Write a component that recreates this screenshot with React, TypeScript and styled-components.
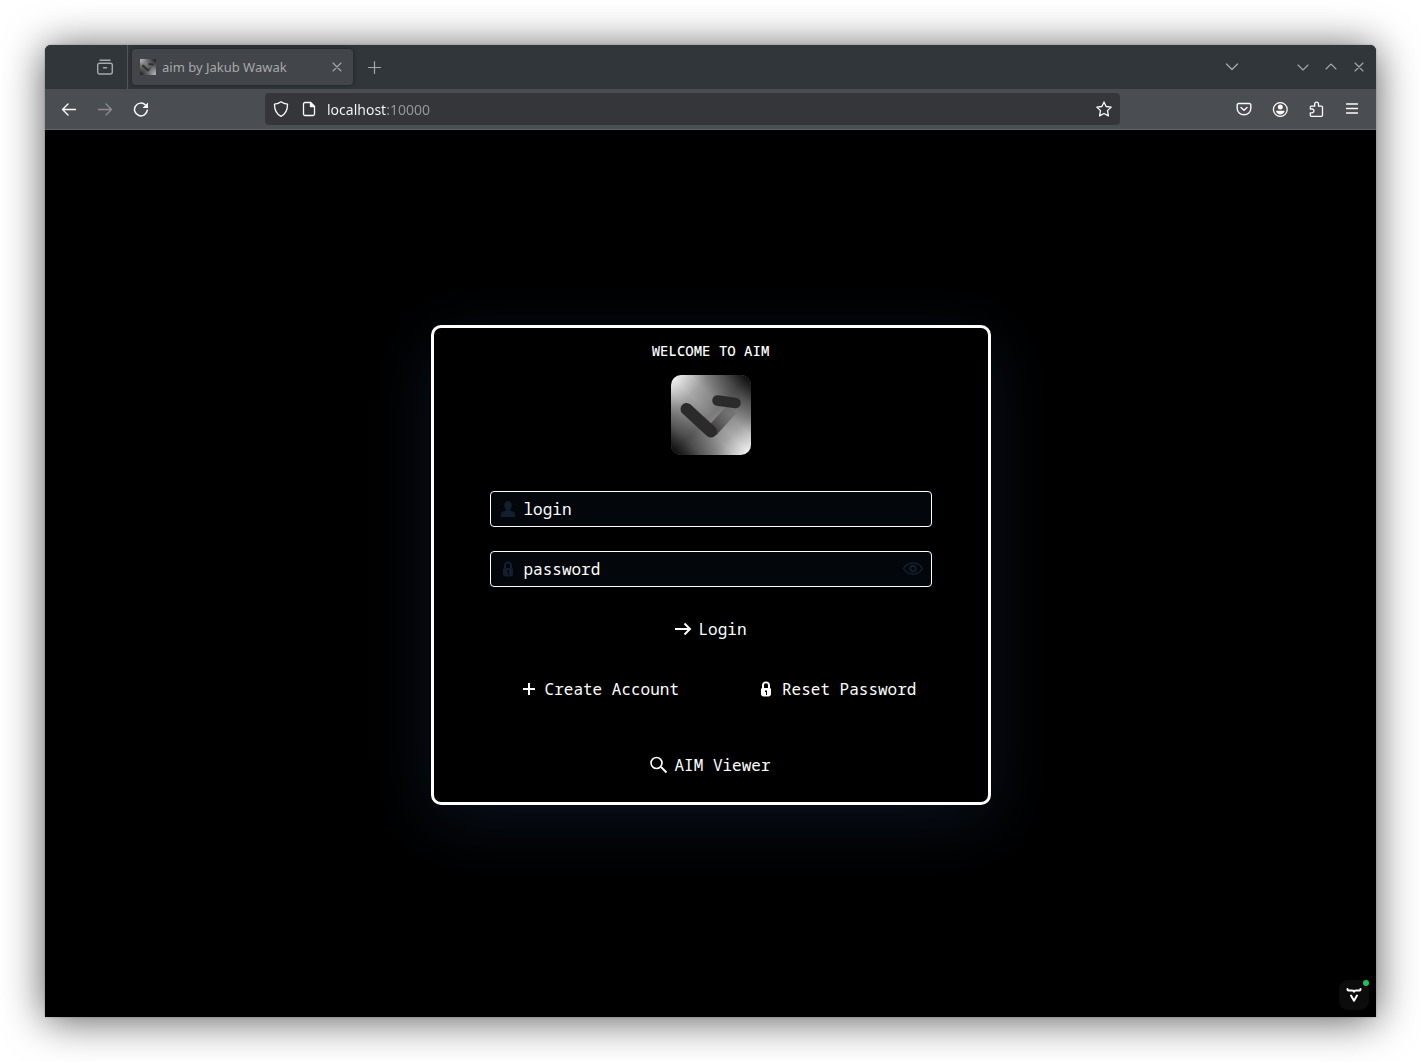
import React from "react";
import styled, { createGlobalStyle } from "styled-components";

const mono = `"Noto Sans Mono", "DejaVu Sans Mono", "Liberation Mono", monospace`;

const GlobalStyle = createGlobalStyle`
  *, *::before, *::after { box-sizing: border-box; }
  body { margin: 0; background: #fff; font-family: "Noto Sans", "Open Sans", sans-serif; }
  button, input { font: inherit; color: inherit; }
  svg { display: block; flex: none; }
`;

const Desktop = styled.div`
  display: flex;
  min-height: 100vh;
  padding: 45px;
`;

const BrowserWindow = styled.div`
  flex: 1;
  min-width: 0;
  display: flex;
  flex-direction: column;
  border-radius: 6px 6px 0 0;
  background: #000;
  box-shadow: 0 0 2px rgba(0, 0, 0, 0.3), 0 3px 42px rgba(0, 0, 0, 0.66);
`;

const TabStrip = styled.header`
  display: flex;
  align-items: stretch;
  height: 44px;
  border-radius: 6px 6px 0 0;
  background: #31363b;
  color: #a6a9ab;
`;

const PlainButton = styled.button`
  display: flex;
  align-items: center;
  justify-content: center;
  padding: 0;
  border: 0;
  background: none;
  cursor: pointer;
`;

const RecentButton = styled(PlainButton)`
  width: 83px;
  padding-left: 37px;
  border-right: 1px solid #51565a;
`;

const Tab = styled.div`
  display: flex;
  align-items: center;
  gap: 6px;
  width: 221px;
  margin: 4px;
  padding: 0 8px;
  border-radius: 4px;
  background: #424549;
  box-shadow: 0 0 4px rgba(0, 0, 0, 0.4);
  font-size: 13px;
`;

const TabTitle = styled.span`
  flex: 1;
  white-space: nowrap;
`;

const IconButton = styled(PlainButton)<{ $size?: number; $tone?: string }>`
  width: ${(p) => p.$size ?? 36}px;
  color: ${(p) => p.$tone ?? "inherit"};
`;

const WindowControls = styled.div`
  display: flex;
  margin-left: auto;
  padding-right: 3px;
`;

const ListTabs = styled(IconButton)`
  margin-right: 39px;
`;

const NavBar = styled.nav`
  display: flex;
  align-items: center;
  height: 41px;
  padding: 0 6px;
  border-bottom: 1px solid #5f6467;
  background: #4a4d51;
  color: #fbfbfe;
`;

const NavGroup = styled.div`
  display: flex;
`;

const AddressBar = styled.form`
  display: flex;
  align-items: center;
  flex: 1;
  min-width: 0;
  height: 32px;
  margin: 0 106px;
  padding: 0 2px;
  border-radius: 4px;
  background: #35363a;
`;

const Address = styled.input`
  flex: 1;
  min-width: 0;
  padding: 0 4px;
  border: 0;
  outline: 0;
  font-size: 14px;
  color: #fbfbfe;
  background: linear-gradient(90deg, #fbfbfe 63px, #97989a 63px);
  background-clip: text;
  -webkit-text-fill-color: transparent;
`;

const Page = styled.main`
  position: relative;
  flex: 1;
  display: flex;
  align-items: center;
  justify-content: center;
  padding: 16px 16px 34px;
  font-family: ${mono};
  font-size: 16px;
  color: #fff;
`;

const Card = styled.form`
  display: flex;
  flex-direction: column;
  align-items: center;
  width: 560px;
  padding: 11px 56px 19px;
  border: 3px solid #fff;
  border-radius: 10px;
  background: #000;
  box-shadow: 0 16px 68px rgba(28, 52, 88, 0.34);
`;

const Title = styled.h1`
  margin: 0 0 12px;
  font-size: 14px;
  line-height: 24px;
  font-weight: 500;
`;

const Field = styled.label`
  display: flex;
  align-items: center;
  width: 100%;
  height: 36px;
  margin-bottom: 24px;
  padding: 0 6px 0 5px;
  border: 1px solid #fff;
  border-radius: 4px;
  background: #03060b;
  color: #131f2f;
`;

const FieldInput = styled.input`
  flex: 1;
  min-width: 0;
  padding: 0 4px;
  border: 0;
  outline: 0;
  background: none;
  color: #fff;
  &::placeholder { color: #fff; opacity: 1; }
`;

const ActionButton = styled(PlainButton)`
  gap: 4px;
  height: 36px;
  padding: 0 8px 0 4px;
  white-space: nowrap;
`;

const AccountRow = styled.div`
  display: flex;
  justify-content: center;
  gap: 63px;
  width: 100%;
  margin: 24px 0 40px;
  padding-left: 16px;
`;

const DevTools = styled(PlainButton)`
  position: absolute;
  right: 7px;
  bottom: 7px;
  width: 30px;
  height: 30px;
  border-radius: 9px;
  background: #0c0c0c;
`;

const StatusDot = styled.span`
  position: absolute;
  top: 0;
  right: 0;
  width: 6px;
  height: 6px;
  border-radius: 50%;
  background: #17c45d;
`;

const LogoImage = styled.svg`
  margin-bottom: 36px;
`;

const Line = ({ d, size = 16, width = 1.3 }: { d: string; size?: number; width?: number }) => (
  <svg width={size} height={size} viewBox={`0 0 ${size} ${size}`} fill="none" stroke="currentColor" strokeWidth={width} strokeLinecap="round" strokeLinejoin="round" aria-hidden="true">
    <path d={d} />
  </svg>
);

const LogoArt = ({ id, radius }: { id: string; radius: number }) => (
  <>
    <defs>
      <linearGradient id={`${id}-bg`} x1="0" y1="0" x2="1" y2="1">
        <stop offset="0" stopColor="#fff" />
        <stop offset="0.25" stopColor="#a8a8a8" />
        <stop offset="0.5" stopColor="#7c7c7c" />
        <stop offset="0.75" stopColor="#a8a8a8" />
        <stop offset="1" stopColor="#fff" />
      </linearGradient>
      <linearGradient id={`${id}-dark`} x1="0" y1="1" x2="1" y2="0">
        <stop offset="0" stopColor="#000" />
        <stop offset="0.2" stopColor="#000" stopOpacity="0.42" />
        <stop offset="0.4" stopColor="#000" stopOpacity="0.06" />
        <stop offset="0.5" stopColor="#000" stopOpacity="0" />
        <stop offset="0.62" stopColor="#000" stopOpacity="0.06" />
        <stop offset="0.82" stopColor="#000" stopOpacity="0.46" />
        <stop offset="1" stopColor="#000" />
      </linearGradient>
      <linearGradient id={`${id}-arm`} gradientUnits="userSpaceOnUse" x1="42" y1="56" x2="62" y2="34">
        <stop offset="0" stopColor="#3c3a3b" />
        <stop offset="1" stopColor="#6c6a6b" stopOpacity="0.4" />
      </linearGradient>
    </defs>
    <rect width="80" height="80" rx={radius} fill={`url(#${id}-bg)`} />
    <rect width="80" height="80" rx={radius} fill={`url(#${id}-dark)`} />
    <path d="M41 56 61 34" stroke={`url(#${id}-arm)`} strokeWidth="12" />
    <path d="M15.500 34 40 56.500" stroke="#2b2b2b" strokeWidth="12" strokeLinecap="round" />
    <path d="M46.500 25.500 64.500 28" stroke="#2b2b2b" strokeWidth="10.500" strokeLinecap="round" />
  </>
);

const UserIcon = () => (
  <svg width="24" height="24" viewBox="0 0 24 24" fill="currentColor" aria-hidden="true">
    <path d="M12 4c2.400 0 3.700 1.700 3.700 4.200 0 1.600-.6 3-1.700 4v1.300l3.600 1.200c1.200.5 1.600 1.700 1.600 3.800V20H4.800v-1.500c0-2.100.4-3.300 1.600-3.800l3.600-1.200v-1.300c-1.100-1-1.700-2.400-1.700-4C8.300 5.700 9.600 4 12 4z" />
  </svg>
);

const LockIcon = () => (
  <svg width="24" height="24" viewBox="0 0 24 24" fill="currentColor" fillRule="evenodd" aria-hidden="true">
    <path d="M8 11V8.500C8 6 9.500 4.500 12 4.500S16 6 16 8.500V11c.7.200 1 .7 1 1.400v4.400c0 1.800-1 2.700-2.700 2.700H9.700C8 19.500 7 18.600 7 16.800v-4.400c0-.7.300-1.200 1-1.400zm2-.1h4V8.500c0-1.400-.7-2.200-2-2.200s-2 .8-2 2.200v2.400zM11 13.500v1.600h1V18h1v-4.500h-2z" />
  </svg>
);

const EyeIcon = () => (
  <svg width="24" height="24" viewBox="0 0 24 24" fill="none" stroke="currentColor" strokeWidth="1.500" aria-hidden="true">
    <path d="M2.500 11.500C4.500 8 8 6 12 6s7.500 2 9.500 5.500c-2 3.500-5.500 5.500-9.500 5.500S4.500 15 2.500 11.500z" />
    <circle cx="12" cy="11.500" r="2.800" strokeWidth="2" />
  </svg>
);

const ActionIcon = ({ d, circle }: { d: string; circle?: boolean }) => (
  <svg width="24" height="24" viewBox="0 0 24 24" fill="none" stroke="currentColor" strokeWidth={circle ? 1.6 : 2} aria-hidden="true">
    {circle && <circle cx="10.500" cy="10" r="5.500" />}
    <path d={d} strokeWidth="2" />
  </svg>
);

export default function App() {
  return (
    <>
      <GlobalStyle />
      <Desktop>
        <BrowserWindow>
          <TabStrip>
            <RecentButton aria-label="Recent browsing">
              <Line d="M3 1.200h10M2.600 4.200h10.800a1.900 1.900 0 0 1 1.900 1.900v7a1.900 1.900 0 0 1-1.900 1.900H2.600a1.900 1.900 0 0 1-1.900-1.900v-7a1.900 1.900 0 0 1 1.900-1.900zM6.500 8.700h3" width={1.4} />
            </RecentButton>
            <Tab>
              <svg width="16" height="16" viewBox="0 0 80 80" fill="none" opacity="0.65" aria-hidden="true"><LogoArt id="tab" radius={4} /></svg>
              <TabTitle>aim by Jakub Wawak</TabTitle>
              <PlainButton aria-label="Close tab"><Line d="M4 4l8 8M12 4l-8 8" width={1.1} /></PlainButton>
            </Tab>
            <IconButton aria-label="New tab"><Line d="M7.500 2.500v12M1.500 8.500h12" width={1.2} /></IconButton>
            <WindowControls>
              <ListTabs aria-label="List all tabs"><Line d="M2.500 5 8 10.500 13.500 5" width={1.3} /></ListTabs>
              <IconButton $size={28} aria-label="Minimize"><Line d="M3 6l5 5 5-5" width={1.1} /></IconButton>
              <IconButton $size={28} aria-label="Maximize"><Line d="M3 10l5-5 5 5" width={1.1} /></IconButton>
              <IconButton $size={28} aria-label="Close"><Line d="M4 4l8 8M12 4l-8 8" width={1.1} /></IconButton>
            </WindowControls>
          </TabStrip>
          <NavBar>
            <NavGroup>
              <IconButton aria-label="Back"><Line d="M14.500 8.500H1.500M7 3 1.500 8.500 7 14" width={1.4} /></IconButton>
              <IconButton $tone="#8b8d90" aria-label="Forward"><Line d="M1.500 8.500h13M9 3l5.500 5.500L9 14" /></IconButton>
              <IconButton aria-label="Reload">
                <svg width="16" height="16" viewBox="0 0 16 16" fill="none" stroke="currentColor" strokeWidth="1.500" aria-hidden="true">
                  <path d="M14.300 9.200A6.400 6.400 0 1 1 12.500 4" strokeLinecap="round" />
                  <path d="M15 1.500V7H9.500z" fill="currentColor" stroke="none" />
                </svg>
              </IconButton>
            </NavGroup>
            <AddressBar>
              <IconButton type="button" $size={28} aria-label="Tracking protection">
                <Line d="M8 .8c2 1.500 4 2.100 6.500 2.300C14.600 8.500 13 13 8 15.300 3 13 1.400 8.500 1.500 3.100 4 2.900 6 2.300 8 .8z" />
              </IconButton>
              <IconButton type="button" $size={28} aria-label="Site information">
                <svg width="16" height="16" viewBox="0 0 16 16" fill="none" stroke="currentColor" strokeWidth="1.300" strokeLinejoin="round" aria-hidden="true">
                  <path d="M4 1.500h5.500l4 4V13a1.500 1.500 0 0 1-1.500 1.500H4A1.500 1.500 0 0 1 2.500 13V3A1.500 1.500 0 0 1 4 1.500z" />
                  <path d="M9.500 1.500v4h4z" fill="currentColor" />
                </svg>
              </IconButton>
              <Address aria-label="Address" defaultValue="localhost:10000" spellCheck={false} />
              <IconButton type="button" $size={28} aria-label="Bookmark this page">
                <Line d="M8 .9l2.100 4.600 5.100.6-3.700 3.500.9 5.300L8 12.500l-4.400 2.400.9-5.300L.8 6.100l5.100-.6z" />
              </IconButton>
            </AddressBar>
            <NavGroup>
              <IconButton aria-label="Save to Pocket"><Line d="M2.500 2.500h11a1.300 1.300 0 0 1 1.300 1.300V7.500a6.800 6.300 0 0 1-13.600 0V3.800a1.300 1.300 0 0 1 1.300-1.300zM5 6.500l3 2.800 3-2.800" width={1.4} /></IconButton>
              <IconButton aria-label="Account">
                <svg width="16" height="16" viewBox="0 0 16 16" fill="currentColor" aria-hidden="true">
                  <circle cx="8.300" cy="8.500" r="6.900" fill="none" stroke="currentColor" strokeWidth="1.300" />
                  <circle cx="8.300" cy="6" r="2.500" />
                  <path d="M4 9.800h8.600c0 2-2 3.700-4.300 3.700S4 11.800 4 9.800z" />
                </svg>
              </IconButton>
              <IconButton aria-label="Extensions"><Line d="M3.300 15.300h10.200a1 1 0 0 0 1-1V6.200a1 1 0 0 0-1-1H10.500V3a1.900 1.900 0 0 0-3.800 0v2.200H3.300a1 1 0 0 0-1 1V8h1.700a1.800 1.800 0 0 1 0 3.800H2.300v2.500a1 1 0 0 0 1 1z" /></IconButton>
              <IconButton aria-label="Menu"><Line d="M2.500 3h11M2.500 7.500h11M2.500 12h11" /></IconButton>
            </NavGroup>
          </NavBar>
          <Page>
            <Card onSubmit={(e) => e.preventDefault()}>
              <Title>WELCOME TO AIM</Title>
              <LogoImage width="80" height="80" viewBox="0 0 80 80" fill="none" role="img" aria-label="AIM logo"><LogoArt id="card" radius={10} /></LogoImage>
              <Field>
                <UserIcon />
                <FieldInput type="text" placeholder="login" aria-label="Login name" />
              </Field>
              <Field>
                <LockIcon />
                <FieldInput type="password" placeholder="password" aria-label="Password" />
                <PlainButton type="button" aria-label="Show password"><EyeIcon /></PlainButton>
              </Field>
              <ActionButton type="submit"><ActionIcon d="M5 12H19.500M14.500 6.500l5.500 5.500-5.500 5.500" />Login</ActionButton>
              <AccountRow>
                <ActionButton type="button"><ActionIcon d="M12 6v12M6 12h12" />Create Account</ActionButton>
                <ActionButton type="button"><LockIcon />Reset Password</ActionButton>
              </AccountRow>
              <ActionButton type="button"><ActionIcon circle d="M15 14l5.500 5.500" />AIM Viewer</ActionButton>
            </Card>
            <DevTools aria-label="Developer tools">
              <svg width="16" height="16" viewBox="0 0 16 16" fill="none" stroke="#fff" strokeWidth="2" strokeLinecap="round" strokeLinejoin="round" aria-hidden="true">
                <path d="M1.500 2v.6a1 1 0 0 0 1 1H6c1.200 0 2 .5 2 1.200 0-.7.800-1.200 2-1.200h3.500a1 1 0 0 0 1-1V2M5 8.500l3 5.200 3-5.200" />
              </svg>
              <StatusDot />
            </DevTools>
          </Page>
        </BrowserWindow>
      </Desktop>
    </>
  );
}
